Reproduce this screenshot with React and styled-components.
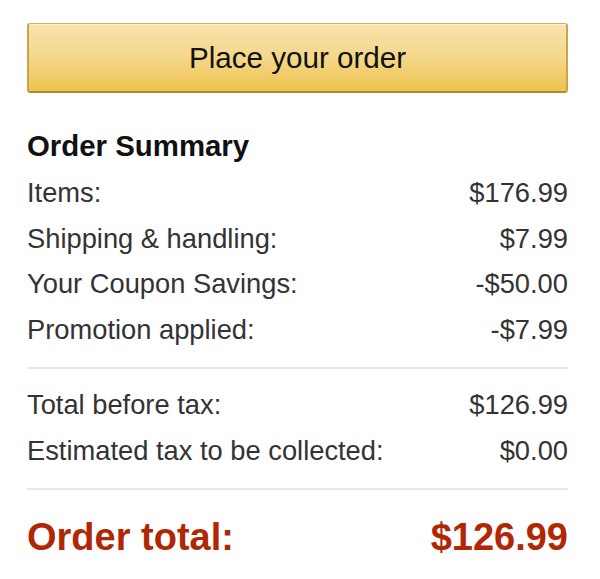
import React from "react";
import styled, { createGlobalStyle } from "styled-components";

const Global = createGlobalStyle`
  html, body { margin: 0; padding: 0; background: #fff; }
  body { font-family: "Liberation Sans", Arial, sans-serif; color: #333; }
`;

const Panel = styled.div`
  width: 541px;
  padding: 23px 0 0 27px;
  box-sizing: content-box;
`;

const OrderButton = styled.button`
  display: block;
  width: 541px;
  height: 70px;
  box-sizing: border-box;
  margin: 0;
  padding: 1px 0 0;
  border: 1px solid;
  border-width: 1px 2px 2px 2px;
  border-color: #d4b25e #c9a548 #b38b2e #c9a548;
  border-radius: 3px;
  background: linear-gradient(to bottom, #f8e3ad 0%, #f4d78b 50%, #efc24d 100%);
  box-shadow: inset 0 1px 0 rgba(255, 255, 255, 0.5);
  font-family: "Liberation Sans", Arial, sans-serif;
  font-size: 29.6px;
  color: #111;
  cursor: pointer;
`;

const Heading = styled.h3`
  margin: 32px 0 3px;
  font-size: 29.4px;
  line-height: 42px;
  font-weight: 700;
  color: #111;
`;

const Row = styled.div`
  display: flex;
  justify-content: space-between;
  font-size: ${(p) => (p.$total ? "38px" : "27.3px")};
  line-height: ${(p) => (p.$total ? "45px" : "45.5px")};
  font-weight: ${(p) => (p.$total ? 700 : 400)};
  color: ${(p) => (p.$total ? "#b12704" : "#333")};
`;

const Divider = styled.hr`
  margin: ${(p) => p.$m || "15px 0 13px"};
  border: 0;
  height: 2px;
  background: #e7e7e7;
`;

const Group = styled.div``;

const items = [
  ["Items:", "$176.99"],
  ["Shipping & handling:", "$7.99"],
  ["Your Coupon Savings:", "-$50.00"],
  ["Promotion applied:", "-$7.99"],
];

const taxes = [
  ["Total before tax:", "$126.99"],
  ["Estimated tax to be collected:", "$0.00"],
];

export default function App() {
  return (
    <>
      <Global />
      <Panel>
        <OrderButton>Place your order</OrderButton>
        <Heading>Order Summary</Heading>
        <Group>
          {items.map(([l, v]) => (
            <Row key={l}>
              <span>{l}</span>
              <span>{v}</span>
            </Row>
          ))}
        </Group>
        <Divider />
        <Group>
          {taxes.map(([l, v]) => (
            <Row key={l}>
              <span>{l}</span>
              <span>{v}</span>
            </Row>
          ))}
        </Group>
        <Divider $m="15px 0 25px" />
        <Row $total>
          <span>Order total:</span>
          <span>$126.99</span>
        </Row>
      </Panel>
    </>
  );
}
